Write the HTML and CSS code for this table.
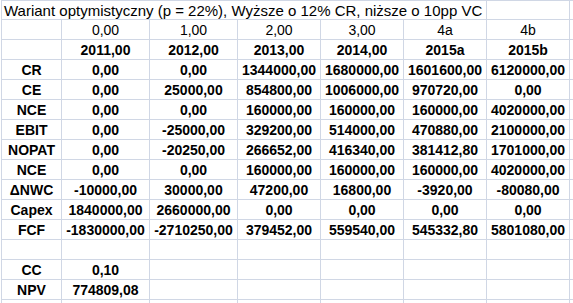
FILE: index.html
```html
<!DOCTYPE HTML>
<html lang="pl">
<head>
  <meta charset="UTF-8">
  <title>Wariant optymistyczny</title>

  <link rel="stylesheet" href="styles.css">
</head>
<body>

	<div class="sheet">

		<!-- title row, text runs over columns A-F -->
		<div class="cell title">Wariant optymistyczny (p = 22%), Wyższe o 12% CR, niższe o 10pp VC</div>
		<div class="cell"></div>
		<div class="cell"></div>

		<div class="cell"></div>
		<div class="cell num">0,00</div>
		<div class="cell num">1,00</div>
		<div class="cell num">2,00</div>
		<div class="cell num">3,00</div>
		<div class="cell num">4a</div>
		<div class="cell num">4b</div>
		<div class="cell"></div>

		<div class="cell"></div>
		<div class="cell num bold">2011,00</div>
		<div class="cell num bold">2012,00</div>
		<div class="cell num bold">2013,00</div>
		<div class="cell num bold">2014,00</div>
		<div class="cell num bold">2015a</div>
		<div class="cell num bold">2015b</div>
		<div class="cell"></div>

		<div class="cell num bold">CR</div>
		<div class="cell num bold">0,00</div>
		<div class="cell num bold">0,00</div>
		<div class="cell num bold">1344000,00</div>
		<div class="cell num bold">1680000,00</div>
		<div class="cell num bold">1601600,00</div>
		<div class="cell num bold">6120000,00</div>
		<div class="cell"></div>

		<div class="cell num bold">CE</div>
		<div class="cell num bold">0,00</div>
		<div class="cell num bold">25000,00</div>
		<div class="cell num bold">854800,00</div>
		<div class="cell num bold">1006000,00</div>
		<div class="cell num bold">970720,00</div>
		<div class="cell num bold">0,00</div>
		<div class="cell"></div>

		<div class="cell num bold">NCE</div>
		<div class="cell num bold">0,00</div>
		<div class="cell num bold">0,00</div>
		<div class="cell num bold">160000,00</div>
		<div class="cell num bold">160000,00</div>
		<div class="cell num bold">160000,00</div>
		<div class="cell num bold">4020000,00</div>
		<div class="cell"></div>

		<div class="cell num bold">EBIT</div>
		<div class="cell num bold">0,00</div>
		<div class="cell num bold">-25000,00</div>
		<div class="cell num bold">329200,00</div>
		<div class="cell num bold">514000,00</div>
		<div class="cell num bold">470880,00</div>
		<div class="cell num bold">2100000,00</div>
		<div class="cell"></div>

		<div class="cell num bold">NOPAT</div>
		<div class="cell num bold">0,00</div>
		<div class="cell num bold">-20250,00</div>
		<div class="cell num bold">266652,00</div>
		<div class="cell num bold">416340,00</div>
		<div class="cell num bold">381412,80</div>
		<div class="cell num bold">1701000,00</div>
		<div class="cell"></div>

		<div class="cell num bold">NCE</div>
		<div class="cell num bold">0,00</div>
		<div class="cell num bold">0,00</div>
		<div class="cell num bold">160000,00</div>
		<div class="cell num bold">160000,00</div>
		<div class="cell num bold">160000,00</div>
		<div class="cell num bold">4020000,00</div>
		<div class="cell"></div>

		<div class="cell num bold">&Delta;NWC</div>
		<div class="cell num bold">-10000,00</div>
		<div class="cell num bold">30000,00</div>
		<div class="cell num bold">47200,00</div>
		<div class="cell num bold">16800,00</div>
		<div class="cell num bold">-3920,00</div>
		<div class="cell num bold">-80080,00</div>
		<div class="cell"></div>

		<div class="cell num bold">Capex</div>
		<div class="cell num bold">1840000,00</div>
		<div class="cell num bold">2660000,00</div>
		<div class="cell num bold">0,00</div>
		<div class="cell num bold">0,00</div>
		<div class="cell num bold">0,00</div>
		<div class="cell num bold">0,00</div>
		<div class="cell"></div>

		<div class="cell num bold">FCF</div>
		<div class="cell num bold">-1830000,00</div>
		<div class="cell num bold">-2710250,00</div>
		<div class="cell num bold">379452,00</div>
		<div class="cell num bold">559540,00</div>
		<div class="cell num bold">545332,80</div>
		<div class="cell num bold">5801080,00</div>
		<div class="cell"></div>

		<div class="cell"></div>
		<div class="cell"></div>
		<div class="cell"></div>
		<div class="cell"></div>
		<div class="cell"></div>
		<div class="cell"></div>
		<div class="cell"></div>
		<div class="cell"></div>

		<div class="cell num bold">CC</div>
		<div class="cell num bold">0,10</div>
		<div class="cell"></div>
		<div class="cell"></div>
		<div class="cell"></div>
		<div class="cell"></div>
		<div class="cell"></div>
		<div class="cell"></div>

		<div class="cell num bold">NPV</div>
		<div class="cell num bold">774809,08</div>
		<div class="cell"></div>
		<div class="cell"></div>
		<div class="cell"></div>
		<div class="cell"></div>
		<div class="cell"></div>
		<div class="cell"></div>

		<div class="cell"></div>
		<div class="cell"></div>
		<div class="cell"></div>
		<div class="cell"></div>
		<div class="cell"></div>
		<div class="cell"></div>
		<div class="cell"></div>
		<div class="cell"></div>

	</div>

</body>
</html>
```

FILE: styles.css
```css
	 html, body {
		margin:0;
		background:#fff;
		overflow:hidden;
	 }

	 /* gridlines = background showing through the 1px gaps */
	 .sheet
	 {
		display:grid;
		grid-template-columns: 59px 87px 87px 82px 82px 82px 82px 1fr;
		grid-template-rows: 18px;
		grid-auto-rows: 19px;
		gap:1px;

		margin-left:1px;
		padding:1px 0 0 1px;
		height:303px;
		box-sizing:border-box;
		overflow:hidden;

		background:#d0d7e5;

		font-family:"Liberation Sans", Arial, sans-serif;
		font-size:14px;
		color:#000;
	 }

	 .cell
	 {
		background:#fff;
		padding-top:2px;
		line-height:17px;
		white-space:nowrap;
		overflow:hidden;
	 }

	 .title {
		grid-column: 1 / 7;
		padding-top:1px;
		padding-left:2px;
		font-size:15px;
	 }

	 .num  { text-align:center }
	 .bold { font-weight:bold }
```
